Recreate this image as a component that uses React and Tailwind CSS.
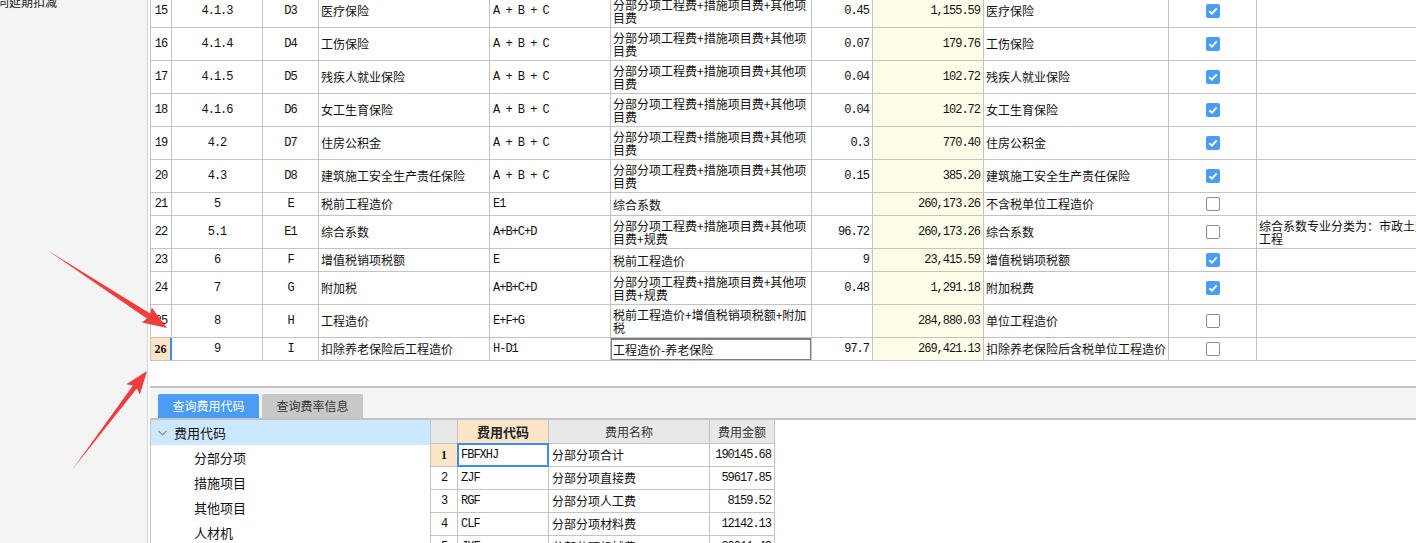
import React from "react";

const L1 = ["分部分项工程费+措施项目费+其他项", "目费"];
const L2 = ["分部分项工程费+措施项目费+其他项", "目费+规费"];

const rows = [
  { n: "15", seq: "4.1.3", code: "D3", name: "医疗保险", base: "A + B + C", f: L1, rate: "0.45", amt: "1,155.59", name2: "医疗保险", on: true, h: "h-[33px]" },
  { n: "16", seq: "4.1.4", code: "D4", name: "工伤保险", base: "A + B + C", f: L1, rate: "0.07", amt: "179.76", name2: "工伤保险", on: true, h: "h-[33px]" },
  { n: "17", seq: "4.1.5", code: "D5", name: "残疾人就业保险", base: "A + B + C", f: L1, rate: "0.04", amt: "102.72", name2: "残疾人就业保险", on: true, h: "h-[33px]" },
  { n: "18", seq: "4.1.6", code: "D6", name: "女工生育保险", base: "A + B + C", f: L1, rate: "0.04", amt: "102.72", name2: "女工生育保险", on: true, h: "h-[33px]" },
  { n: "19", seq: "4.2", code: "D7", name: "住房公积金", base: "A + B + C", f: L1, rate: "0.3", amt: "770.40", name2: "住房公积金", on: true, h: "h-[33px]" },
  { n: "20", seq: "4.3", code: "D8", name: "建筑施工安全生产责任保险", base: "A + B + C", f: L1, rate: "0.15", amt: "385.20", name2: "建筑施工安全生产责任保险", on: true, h: "h-[33px]" },
  { n: "21", seq: "5", code: "E", name: "税前工程造价", base: "E1", f: ["综合系数"], rate: "", amt: "260,173.26", name2: "不含税单位工程造价", on: false, h: "h-[23px]" },
  { n: "22", seq: "5.1", code: "E1", name: "综合系数", base: "A+B+C+D", f: L2, rate: "96.72", amt: "260,173.26", name2: "综合系数", on: false, h: "h-[33px]", remark: ["综合系数专业分类为：市政土建", "工程"] },
  { n: "23", seq: "6", code: "F", name: "增值税销项税额", base: "E", f: ["税前工程造价"], rate: "9", amt: "23,415.59", name2: "增值税销项税额", on: true, h: "h-[23px]" },
  { n: "24", seq: "7", code: "G", name: "附加税", base: "A+B+C+D", f: L2, rate: "0.48", amt: "1,291.18", name2: "附加税费", on: true, h: "h-[33px]" },
  { n: "25", seq: "8", code: "H", name: "工程造价", base: "E+F+G", f: ["税前工程造价+增值税销项税额+附加", "税"], rate: "", amt: "284,880.03", name2: "单位工程造价", on: false, h: "h-[33px]" },
  { n: "26", seq: "9", code: "I", name: "扣除养老保险后工程造价", base: "H-D1", f: ["工程造价-养老保险"], rate: "97.7", amt: "269,421.13", name2: "扣除养老保险后含税单位工程造价", on: false, h: "h-[23px]", sel: true },
];

const sub = [
  { n: "1", code: "FBFXHJ", name: "分部分项合计", amt: "190145.68", sel: true },
  { n: "2", code: "ZJF", name: "分部分项直接费", amt: "59617.85" },
  { n: "3", code: "RGF", name: "分部分项人工费", amt: "8159.52" },
  { n: "4", code: "CLF", name: "分部分项材料费", amt: "12142.13" },
  { n: "5", code: "JXF", name: "分部分项机械费", amt: "22011.49" },
];

function Check({ on }) {
  if (on) {
    return (
      <span className="w-[14px] h-[14px] rounded-[2px] bg-[#4a9cf5] flex items-center justify-center">
        <svg width="10" height="8" viewBox="0 0 10 8">
          <path d="M1.3 4.2 L3.9 6.6 L8.7 1.4" stroke="#ffffff" strokeWidth="1.9" fill="none" />
        </svg>
      </span>
    );
  }
  return <span className="w-[14px] h-[14px] rounded-[2px] border border-[#8c8c8c] bg-white" />;
}

function Lines({ lines }) {
  return (
    <div className="leading-[13px]">
      {lines.map((l, i) => (
        <div key={i} className="whitespace-nowrap">{l}</div>
      ))}
    </div>
  );
}

export default function App() {
  return (
    <div className="relative w-[1416px] h-[543px] overflow-hidden flex bg-white text-[#111] text-[12px] [font-family:'Noto_Sans_CJK_SC',sans-serif]">
      {/* left panel */}
      <div className="w-[148px] shrink-0 bg-[#f4f4f4] border-r border-[#d6d6d6] overflow-hidden">
        <div className="whitespace-nowrap -mt-[6px] -ml-[15px] leading-[16px] text-[12px] text-[#222]">合同延期扣减</div>
      </div>

      {/* main */}
      <div className="flex-1 min-w-0 flex flex-col pl-[2px] overflow-hidden">
        {/* main table */}
        <div className="-mt-[5px] w-max border-l border-[#c3c3c3]">
          {rows.map((r) => (
            <div key={r.n} className={`flex ${r.h} border-b border-[#c3c3c3]`}>
              <div
                className={
                  r.sel
                    ? "w-[21px] shrink-0 border-r-2 border-[#3d8ee8] bg-[#fde4c4] flex items-center justify-center font-bold text-[12px] [font-family:'Liberation_Serif',serif]"
                    : "w-[21px] shrink-0 border-r border-[#c3c3c3] flex items-center justify-center text-[12px] tracking-[-1px] [font-family:'Liberation_Mono',monospace]"
                }
              >
                {r.n}
              </div>
              <div className="w-[91px] shrink-0 border-r border-[#c3c3c3] flex items-center justify-center text-[12px] tracking-[-1px] [font-family:'Liberation_Mono',monospace]">
                {r.seq}
              </div>
              <div className="w-[56px] shrink-0 border-r border-[#c3c3c3] flex items-center justify-center text-[12px] tracking-[-1px] [font-family:'Liberation_Mono',monospace]">
                {r.code}
              </div>
              <div className="w-[171px] shrink-0 border-r border-[#c3c3c3] flex items-center pl-[2px] whitespace-nowrap overflow-hidden">
                {r.name}
              </div>
              <div className="w-[121px] shrink-0 border-r border-[#c3c3c3] flex items-center pl-[3px] whitespace-pre text-[12px] tracking-[-1px] [font-family:'Liberation_Mono',monospace]">
                {r.base}
              </div>
              <div className="relative w-[201px] shrink-0 border-r border-[#c3c3c3] flex items-center pl-[2px] overflow-hidden">
                <Lines lines={r.f} />
                {r.sel && <span className="absolute -left-px top-0 -right-px -bottom-px border-2 border-[#7f7f7f]" />}
              </div>
              <div className="w-[61px] shrink-0 border-r border-[#c3c3c3] flex items-center justify-end pr-[3px] text-[12px] tracking-[-1px] [font-family:'Liberation_Mono',monospace]">
                {r.rate}
              </div>
              <div className="w-[111px] shrink-0 border-r border-[#c3c3c3] bg-[#fefee8] flex items-center justify-end pr-[3px] text-[12px] tracking-[-1px] [font-family:'Liberation_Mono',monospace]">
                {r.amt}
              </div>
              <div className="w-[185px] shrink-0 border-r border-[#c3c3c3] flex items-center pl-[2px] whitespace-nowrap overflow-hidden">
                {r.name2}
              </div>
              <div className="w-[88px] shrink-0 border-r border-[#c3c3c3] flex items-center justify-center">
                <Check on={r.on} />
              </div>
              <div className="w-[176px] shrink-0 flex items-center pl-[2px] overflow-hidden">
                {r.remark && <Lines lines={r.remark} />}
              </div>
            </div>
          ))}
        </div>

        <div className="h-[25px] shrink-0" />

        {/* tab bar */}
        <div className="h-[32px] shrink-0 border-t-2 border-[#c3c3c3] bg-[#f4f4f4] flex items-end gap-[3px] pl-[8px]">
          <div className="w-[101px] h-[24px] rounded-t-[2px] bg-[#4a9cf5] text-white flex items-center justify-center">查询费用代码</div>
          <div className="w-[101px] h-[24px] rounded-t-[2px] bg-[#c8c8c8] text-[#333] flex items-center justify-center">查询费率信息</div>
        </div>

        {/* bottom panel */}
        <div className="flex-1 flex border-t-2 border-[#c3c3c3]">
          <div className="w-[280px] shrink-0 border-l border-[#c3c3c3] text-[13px]">
            <div className="h-[25px] bg-[#cce8ff] flex items-center pl-[7px] gap-[7px]">
              <svg width="9" height="6" viewBox="0 0 9 6">
                <path d="M0.5 0.8 L4.5 4.8 L8.5 0.8" stroke="#8a8a8a" strokeWidth="1.2" fill="none" />
              </svg>
              <span>费用代码</span>
            </div>
            {["分部分项", "措施项目", "其他项目", "人材机"].map((t) => (
              <div key={t} className="h-[25px] flex items-center pl-[43px]">{t}</div>
            ))}
          </div>

          <div className="w-max border-l border-[#c3c3c3] self-start">
            <div className="flex h-[24px] border-b border-[#c3c3c3] bg-[#e8e8e8] text-[#333]">
              <div className="w-[27px] shrink-0 border-r border-[#c3c3c3]" />
              <div className="w-[91px] shrink-0 border-r border-[#c3c3c3] bg-[#fde6c8] flex items-center justify-center font-bold text-[13px] text-[#222]">费用代码</div>
              <div className="w-[161px] shrink-0 border-r border-[#c3c3c3] flex items-center justify-center">费用名称</div>
              <div className="w-[65px] shrink-0 border-r border-[#c3c3c3] flex items-center justify-center">费用金额</div>
            </div>
            {sub.map((s) => (
              <div key={s.n} className="flex h-[23px] border-b border-[#c3c3c3]">
                <div
                  className={
                    s.sel
                      ? "w-[27px] shrink-0 border-r border-[#c3c3c3] bg-[#fde6c8] flex items-center justify-center font-bold text-[12px] [font-family:'Liberation_Serif',serif]"
                      : "w-[27px] shrink-0 border-r border-[#c3c3c3] flex items-center justify-center text-[12px] tracking-[-1px] [font-family:'Liberation_Mono',monospace]"
                  }
                >
                  {s.n}
                </div>
                <div className="relative w-[91px] shrink-0 border-r border-[#c3c3c3] flex items-center pl-[3px] text-[12px] tracking-[-1px] [font-family:'Liberation_Mono',monospace]">
                  {s.code}
                  {s.sel && <span className="absolute -left-px -top-px -right-px -bottom-px border-2 border-[#3c8ee6]" />}
                </div>
                <div className="w-[161px] shrink-0 border-r border-[#c3c3c3] flex items-center pl-[3px] whitespace-nowrap">{s.name}</div>
                <div className="w-[65px] shrink-0 border-r border-[#c3c3c3] flex items-center justify-end pr-[3px] text-[12px] tracking-[-1px] [font-family:'Liberation_Mono',monospace]">
                  {s.amt}
                </div>
              </div>
            ))}
          </div>
        </div>
      </div>

      {/* annotation arrows */}
      <svg className="absolute left-0 top-0 pointer-events-none" width="1416" height="543" viewBox="0 0 1416 543">
        <polygon
          points="47,250 146.9,318.5 142,322.5 167,328 151.8,307.4 150.1,313.5"
          fill="#f03c3c"
        />
        <polygon
          points="72,470 132.9,385.5 126.3,384.3 147,371 139.9,394.5 136.9,388.5"
          fill="#f03c3c"
        />
      </svg>
    </div>
  );
}
